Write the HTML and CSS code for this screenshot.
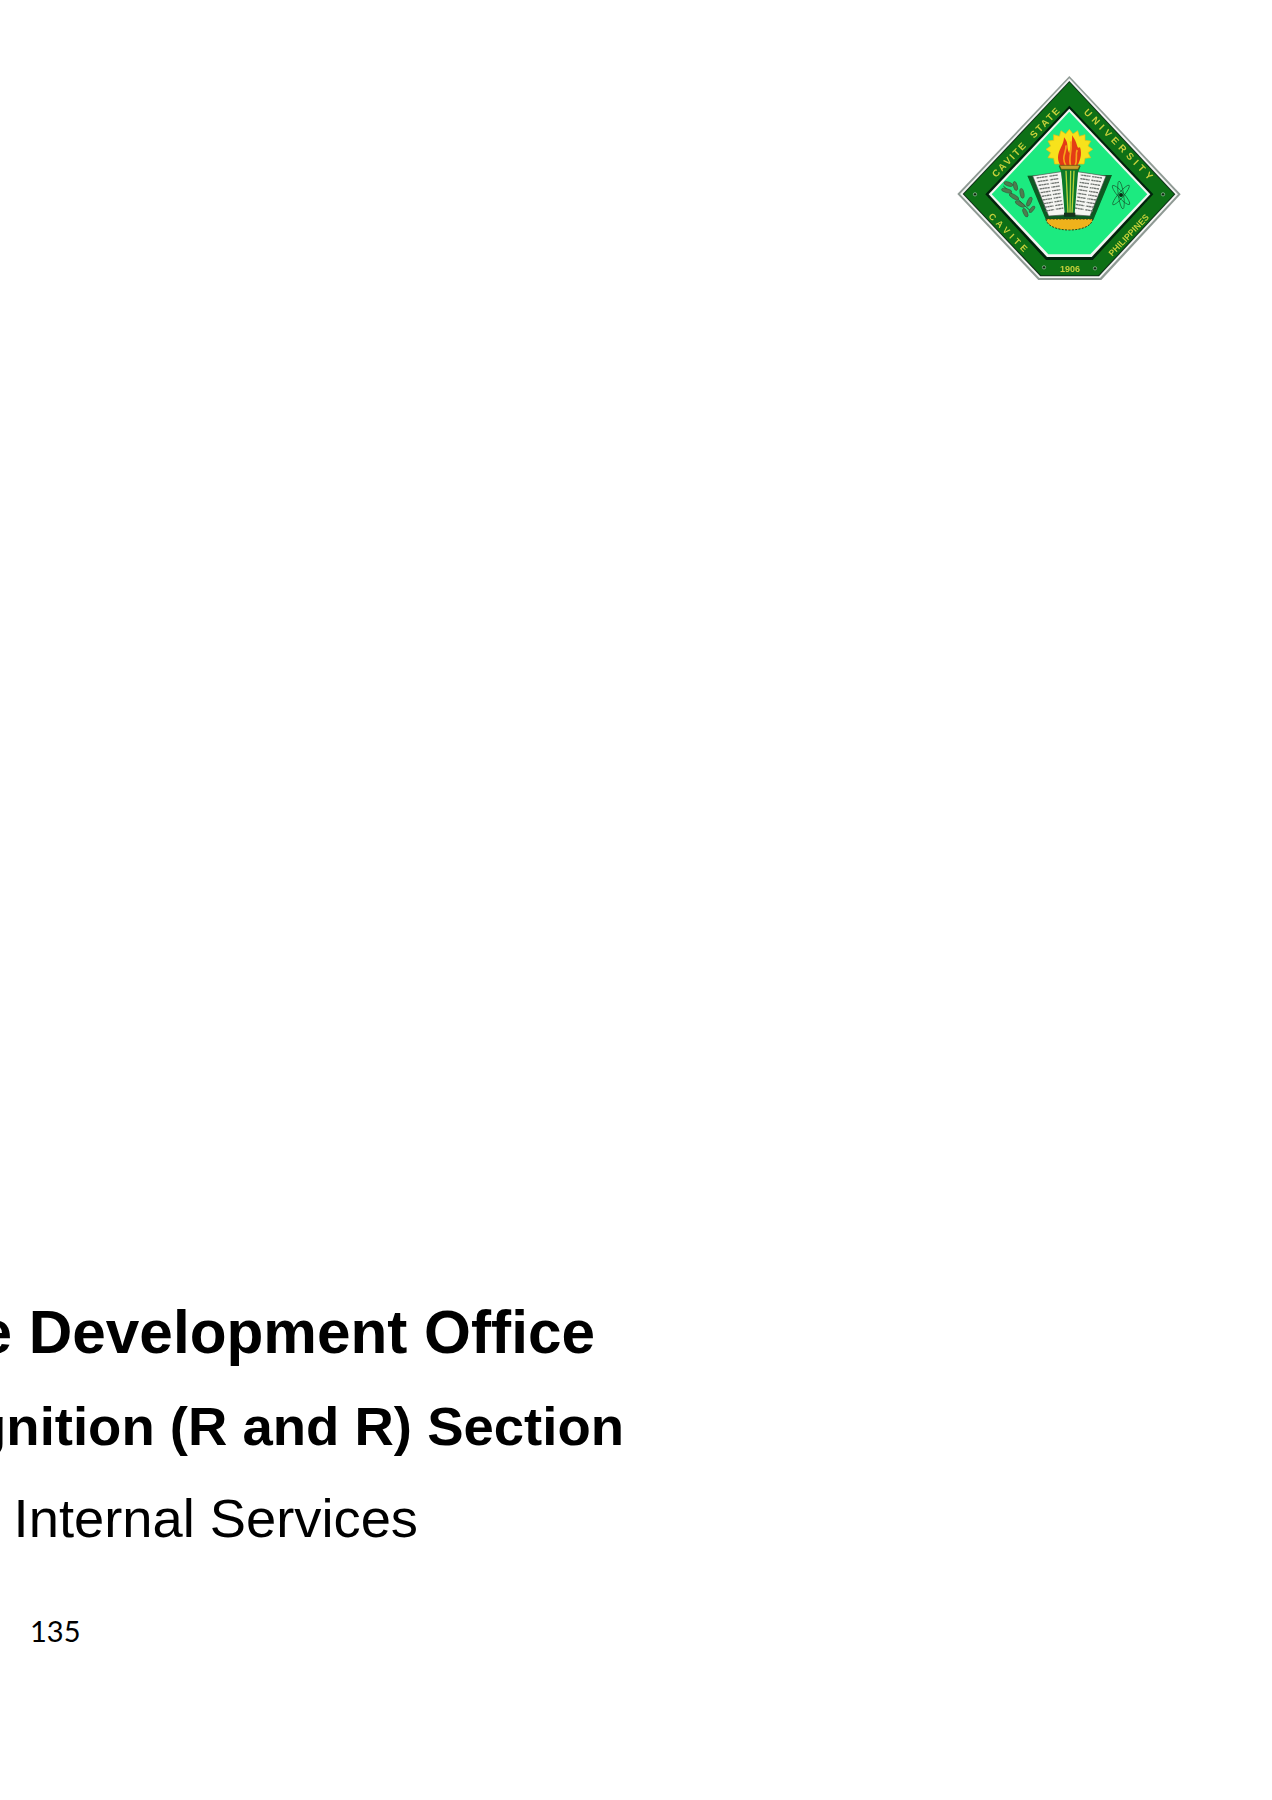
FILE: index.html
```html
<!DOCTYPE html>
<html lang="en">
<head>
<meta charset="utf-8">
<title>Recognition Section</title>
<link rel="stylesheet" href="styles.css">
</head>
<body>
<main class="page">
  <header class="logo-row">
    <svg class="logo" viewBox="0 0 750 690" role="img" aria-label="Cavite State University seal">
      <defs>
        <filter id="soft" x="-5%" y="-5%" width="110%" height="110%"><feGaussianBlur stdDeviation="2"/></filter>
        <path id="p-cs" d="M168 354 L380 135"/>
        <path id="p-un" d="M430 158 L656 392"/>
        <path id="p-ca" d="M144 470 L264 590"/>
        <path id="p-ph" d="M517 590 L648 453"/>
      </defs>
      <g filter="url(#soft)">
        <polygon points="388,48 722,403 484,660 295,660 52,402" fill="#8f9a94"/>
        <polygon points="388,55 714,403 480,654 298,654 60,402" fill="#f4f4f4"/>
        <polygon points="388,63 706,403 477,649 301,649 68,402" fill="#10301a"/>
        <polygon points="388,67 702,403 475,646 303,646 72,402" fill="#0a6f14"/>
        <polygon points="388,137 640,403 458,600 318,600 136,403" fill="#06200a"/>
        <polygon points="388,146 631,403 455,591 321,591 146,403" fill="#f2f5f2"/>
        <polygon points="388,155 622,403 451,583 325,583 155,403" fill="#1eea80"/>

        <g fill="#c6cf3c" font-family="'Liberation Sans', sans-serif" font-weight="700">
          <text font-size="29" letter-spacing="5.5"><textPath href="#p-cs">CAVITE&#160;&#160;STATE</textPath></text>
          <text font-size="29" letter-spacing="12"><textPath href="#p-un">UNIVERSITY</textPath></text>
          <text font-size="27" letter-spacing="11"><textPath href="#p-ca">CAVITE</textPath></text>
          <text font-size="26" letter-spacing="0"><textPath href="#p-ph">PHILIPPINES</textPath></text>
          <text class="logo-year" x="390" y="635" font-size="27" text-anchor="middle">1906</text>
        </g>
        <g fill="#0b2a10" stroke="#a9c9ae" stroke-width="2">
          <circle cx="105" cy="403" r="5"/><circle cx="669" cy="403" r="5"/>
          <circle cx="312" cy="622" r="5"/><circle cx="465" cy="625" r="5"/>
        </g>

        <polygon fill="#f7e21a" stroke="#f2b90f" stroke-width="2" points="388,208 399,222 413,212 418,229 435,224 435,241 452,243 444,258 458,268 444,278 452,293 435,295 432,312 344,312 341,295 324,293 332,278 318,268 332,258 324,243 341,241 341,224 358,229 363,212 377,222"/>
        <path d="M362 318 C340 280 372 262 372 232 C388 250 378 262 388 280 C392 258 398 245 396 226 C416 252 408 268 420 262 C428 285 418 305 412 318Z" fill="#e33a18"/>
        <path d="M378 318 C362 292 380 276 378 256 M392 318 C384 292 398 272 392 244 M405 318 C414 298 405 280 412 270" fill="none" stroke="#f7a21a" stroke-width="5"/>

        <polygon points="262,347 318,345 388,465 455,345 516,345 460,480 318,480" fill="#0a5a22"/>
        <polygon points="278,348 364,335 384,464 326,468" fill="#f5f5f2" stroke="#4a4f4a" stroke-width="2"/>
        <polygon points="498,348 412,335 394,464 450,468" fill="#f5f5f2" stroke="#4a4f4a" stroke-width="2"/>
        <g stroke="#6f7470" stroke-width="4" stroke-dasharray="7 1">
          <path d="M290 354 L354 345 M293 365 L355 356 M296 376 L357 367 M299 387 L359 378 M302 398 L361 389 M305 409 L362 400 M308 420 L364 411 M311 431 L366 422 M314 442 L368 433 M317 453 L370 444"/>
          <path d="M486 354 L422 345 M483 365 L421 356 M480 376 L419 367 M477 387 L417 378 M474 398 L415 389 M471 409 L413 400 M468 420 L411 411 M465 431 L409 422 M462 442 L407 433 M459 453 L405 444"/>
        </g>
        <path d="M324 344 L347 458 M455 344 L431 458" stroke="#f5f5f2" stroke-width="5" fill="none"/>
        <polygon points="356,318 422,318 414,338 404,462 374,462 364,338" fill="#0c7a2a"/>
        <polygon points="358,316 420,316 414,328 364,328" fill="#c9a02a" stroke="#5a4a10" stroke-width="2"/>
        <path d="M378 332 L384 460 M392 332 L390 460 M402 332 L396 460" stroke="#b7d23a" stroke-width="4" fill="none"/>
        <rect x="372" y="458" width="34" height="12" fill="#15301c"/>
        <path d="M318 477 H458 C456 498 425 510 388 510 C351 510 320 498 318 477Z" fill="#efb21a" stroke="#3a3a12" stroke-width="3" stroke-dasharray="6 4"/>

        <g fill="#4d7d50" stroke="#2f4f32" stroke-width="1.5">
          <path d="M190 378 L274 455" fill="none" stroke-width="3"/>
          <ellipse cx="205" cy="372" rx="14" ry="6" transform="rotate(20 205 372)"/>
          <ellipse cx="200" cy="392" rx="16" ry="6" transform="rotate(15 200 392)"/>
          <ellipse cx="226" cy="378" rx="6" ry="14" transform="rotate(-15 226 378)"/>
          <ellipse cx="222" cy="410" rx="16" ry="6" transform="rotate(30 222 410)"/>
          <ellipse cx="246" cy="400" rx="6" ry="15" transform="rotate(-10 246 400)"/>
          <ellipse cx="240" cy="432" rx="16" ry="6" transform="rotate(30 240 432)"/>
          <ellipse cx="268" cy="425" rx="6" ry="15" transform="rotate(25 268 425)"/>
          <ellipse cx="256" cy="458" rx="6" ry="14" transform="rotate(-25 256 458)"/>
          <ellipse cx="276" cy="448" rx="5" ry="12" transform="rotate(40 276 448)"/>
        </g>
        <g fill="none" stroke="#17512b" stroke-width="2">
          <ellipse cx="543" cy="405" rx="38" ry="9" transform="rotate(48 543 405)"/>
          <ellipse cx="543" cy="405" rx="38" ry="8" transform="rotate(-50 543 405)"/>
          <ellipse cx="543" cy="405" rx="8" ry="42" transform="rotate(-8 543 405)"/>
        </g>
        <circle cx="543" cy="405" r="6" fill="#0c2a14"/>
      </g>
    </svg>
  </header>

  <section class="titles">
    <h1 class="title-office"><span class="cut">Human Resource</span> Development Office</h1>
    <h2 class="title-section"><span class="cut">Reward and Reco</span>gnition (R and R) Section</h2>
    <p class="title-services"><span class="cut">Core and</span> Internal Services</p>
    <p class="page-number">135</p>
  </section>
</main>
</body>
</html>
```

FILE: styles.css
```css
html, body {
  margin: 0;
  padding: 0;
  background: #ffffff;
}

.page {
  width: 1272px;
  height: 1800px;
  overflow: hidden;
  color: #000000;
  font-family: "Liberation Sans", Arial, sans-serif;
}

.logo-row {
  display: flex;
  justify-content: flex-end;
  padding: 60px 82px 0 0;
}

.logo {
  display: block;
  width: 250px;
  height: 230px;
}

.titles {
  width: 660px;
  margin-top: 1010px;
  display: flex;
  flex-direction: column;
  align-items: flex-end;
}

.title-office {
  margin: 0;
  white-space: nowrap;
  font-size: 60.3px;
  line-height: 64px;
  font-weight: 700;
  padding-right: 65px;
}

.title-section {
  margin: 33px 0 0;
  white-space: nowrap;
  font-size: 54.5px;
  line-height: 60px;
  font-weight: 700;
  padding-right: 36px;
}

.title-services {
  margin: 32px 0 0;
  white-space: nowrap;
  font-size: 54.3px;
  line-height: 60px;
  font-weight: 400;
  padding-right: 242px;
}

.page-number {
  margin: 65px 0 0;
  align-self: flex-start;
  font-family: Lato, "Liberation Sans", sans-serif;
  font-size: 29px;
  line-height: 34px;
  padding-left: 30px;
}
```
